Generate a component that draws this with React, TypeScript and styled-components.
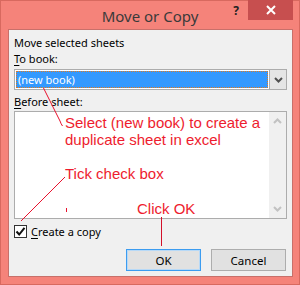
import React from 'react';
import styled, { createGlobalStyle } from 'styled-components';

const GlobalStyle = createGlobalStyle`
  html, body {
    margin: 0;
    padding: 0;
    background: #f5837a;
  }
  * {
    box-sizing: border-box;
  }
`;

const App: React.FC = () => {
  return (
    <>
      <GlobalStyle />
      <Window>
        <TitleBar>
          <Title>Move or Copy</Title>
          <HelpButton>?</HelpButton>
          <CloseButton>
            <svg width="10" height="10" viewBox="0 0 10 10">
              <path d="M1 1 L9 9 M9 1 L1 9" stroke="#ffffff" strokeWidth="2" />
            </svg>
          </CloseButton>
        </TitleBar>
        <Panel>
          <Label>Move selected sheets</Label>
          <Label>
            <u>T</u>o book:
          </Label>
          <Combo>
            <ComboValue>
              <Selected>(new book)</Selected>
            </ComboValue>
            <ComboArrow>
              <svg width="9" height="6" viewBox="0 0 9 6">
                <path d="M1 1 L4.5 4.5 L8 1" stroke="#505050" strokeWidth="2" fill="none" />
              </svg>
            </ComboArrow>
          </Combo>
          <Label $top={4}>
            <u>B</u>efore sheet:
          </Label>
          <ListBox>
            <ListArea />
            <ScrollBar>
              <svg width="9" height="6" viewBox="0 0 9 6">
                <path d="M1 5 L4.5 1.5 L8 5" stroke="#c2c2c2" strokeWidth="2" fill="none" />
              </svg>
              <svg width="9" height="6" viewBox="0 0 9 6">
                <path d="M1 1 L4.5 4.5 L8 1" stroke="#c2c2c2" strokeWidth="2" fill="none" />
              </svg>
            </ScrollBar>
          </ListBox>
          <CheckRow>
            <CheckBox>
              <svg width="11" height="11" viewBox="0 0 11 11">
                <path d="M1.5 5.5 L4.2 8.5 L9.5 1.8" stroke="#111" strokeWidth="2" fill="none" />
              </svg>
            </CheckBox>
            <CheckLabel>
              <u>C</u>reate a copy
            </CheckLabel>
          </CheckRow>
          <ButtonRow>
            <Button $primary>OK</Button>
            <Button>Cancel</Button>
          </ButtonRow>
        </Panel>
        <Note $x={64} $y={113}>
          Select (new book) to create a
          <br />
          duplicate sheet in excel
        </Note>
        <Note $x={64} $y={164}>Tick check box</Note>
        <Note $x={136} $y={199}>Click OK</Note>
        <Arrows width="300" height="285" viewBox="0 0 300 285">
          <path d="M43.5 88 L60 121 Q61 124 62.5 126" stroke="#e8112d" strokeWidth="1" fill="none" />
          <path d="M65 177 L21 221" stroke="#e8112d" strokeWidth="1" fill="none" />
          <path d="M66.5 208 L66.5 212" stroke="#e8112d" strokeWidth="1" fill="none" />
          <path d="M161.5 217 L161.5 246" stroke="#d3102a" strokeWidth="1" fill="none" />
        </Arrows>
      </Window>
    </>
  );
};

export default App;

const Window = styled.div`
  position: relative;
  width: 300px;
  height: 285px;
  display: flex;
  flex-direction: column;
  background: #f5837a;
  border: 1px solid #d8695f;
  font-family: 'Noto Sans', 'Liberation Sans', sans-serif;
`;

const TitleBar = styled.div`
  position: relative;
  height: 28px;
  display: flex;
  align-items: center;
  justify-content: center;
`;

const Title = styled.div`
  font-size: 15px;
  color: #3a3a3a;
  margin-top: 1px;
`;

const HelpButton = styled.div`
  position: absolute;
  left: 228px;
  top: 1px;
  width: 14px;
  text-align: center;
  font-size: 12px;
  font-weight: 700;
  color: #222;
`;

const CloseButton = styled.div`
  position: absolute;
  left: 247px;
  top: -1px;
  width: 45px;
  height: 20px;
  background: #c74f4f;
  display: flex;
  align-items: center;
  justify-content: center;
`;

const Panel = styled.div`
  margin: 0 6px 7px 7px;
  flex: 1;
  background: #f0f0f0;
  border: 1px solid #c8706a;
  padding: 5px 5px 0 5px;
  display: flex;
  flex-direction: column;
  font-size: 11px;
  color: #000;
`;

const Label = styled.div<{ $top?: number }>`
  height: 16px;
  line-height: 16px;
  margin-top: ${({ $top }) => $top ?? 0}px;
  u {
    text-decoration-thickness: 1px;
    text-underline-offset: 2px;
  }
`;

const Combo = styled.div`
  margin-top: 2px;
  height: 21px;
  display: flex;
  border: 1px solid #acacac;
  background: #ffffff;
`;

const ComboValue = styled.div`
  flex: 1;
  padding: 1px;
  display: flex;
`;

const Selected = styled.div`
  flex: 1;
  background: #3399ff;
  color: #ffffff;
  line-height: 15px;
  padding-left: 1px;
  border: 1px dotted #e07a20;
`;

const ComboArrow = styled.div`
  width: 17px;
  background: #e5e5e5;
  border-left: 1px solid #acacac;
  display: flex;
  align-items: center;
  justify-content: center;
`;

const ListBox = styled.div`
  margin-top: 1px;
  height: 108px;
  display: flex;
  border: 1px solid #acacac;
  background: #ffffff;
`;

const ListArea = styled.div`
  flex: 1;
`;

const ScrollBar = styled.div`
  width: 17px;
  background: #f0f0f0;
  display: flex;
  flex-direction: column;
  justify-content: space-between;
  align-items: center;
  padding: 6px 0 6px;
`;

const CheckRow = styled.div`
  margin-top: 6px;
  display: flex;
  align-items: center;
  gap: 4px;
  height: 13px;
`;

const CheckBox = styled.div`
  width: 13px;
  height: 13px;
  border: 1px solid #333333;
  background: #ffffff;
  display: flex;
  align-items: center;
  justify-content: center;
`;

const CheckLabel = styled.div`
  line-height: 13px;
  u {
    text-decoration-thickness: 1px;
    text-underline-offset: 2px;
  }
`;

const ButtonRow = styled.div`
  margin-top: 11px;
  display: flex;
  justify-content: flex-end;
  gap: 10px;
  padding-right: 1px;
`;

const Button = styled.div<{ $primary?: boolean }>`
  width: 75px;
  height: 22px;
  display: flex;
  align-items: center;
  justify-content: center;
  background: #e1e1e1;
  border: 1px solid ${({ $primary }) => ($primary ? '#3c9cf0' : '#adadad')};
  ${({ $primary }) => ($primary ? 'box-shadow: inset 0 0 0 1px #b7d9f7;' : '')}
  font-size: 11.5px;
  color: #000;
`;

const Note = styled.div<{ $x: number; $y: number }>`
  position: absolute;
  left: ${({ $x }) => $x}px;
  top: ${({ $y }) => $y}px;
  font-family: 'Liberation Sans', Arial, sans-serif;
  font-size: 15px;
  line-height: 17px;
  color: #ee1c2e;
  white-space: nowrap;
`;

const Arrows = styled.svg`
  position: absolute;
  left: -1px;
  top: -1px;
  pointer-events: none;
`;
